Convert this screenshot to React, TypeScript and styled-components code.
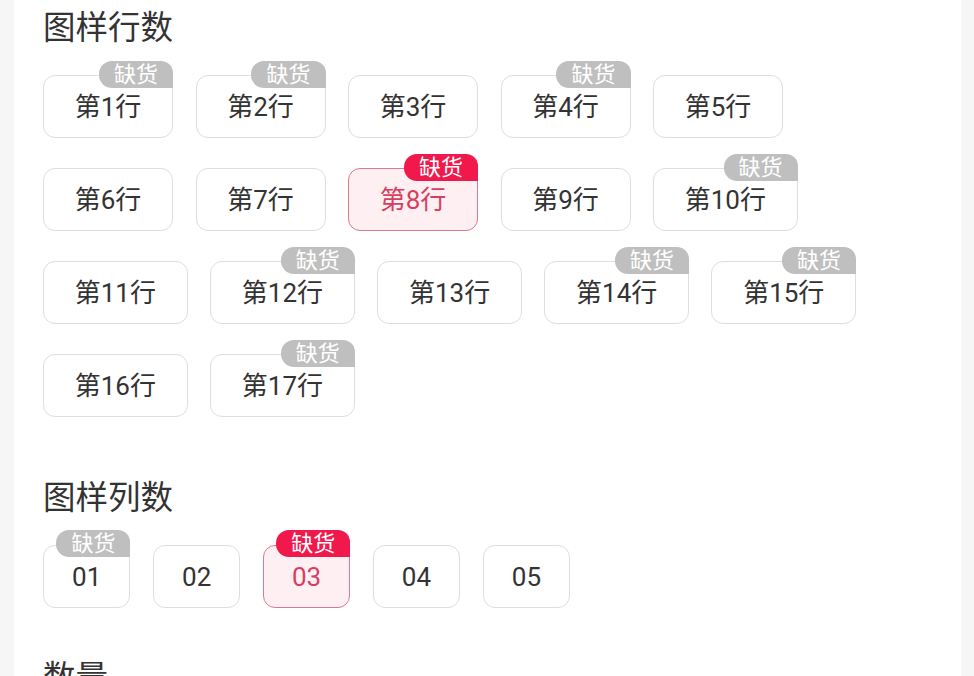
import React from "react";
import styled, { createGlobalStyle } from "styled-components";

const GlobalStyle = createGlobalStyle`
  html, body {
    margin: 0;
    padding: 0;
    background: #f6f6f6;
  }
  body {
    font-family: "Roboto", "Noto Sans CJK SC", sans-serif;
    color: #333;
  }
`;

const Page = styled.div`
  padding: 0 13px 0 14px;
  min-height: 676px;
`;

const Panel = styled.div`
  background: #ffffff;
  min-height: 676px;
  padding: 8px 29px 40px 29px;
  box-sizing: border-box;
`;

const Section = styled.section<{ $gap: number }>`
  margin-bottom: ${(p) => p.$gap}px;
`;

const Title = styled.h2`
  margin: 0;
  font-size: 32.5px;
  line-height: 40px;
  font-weight: 400;
  color: #333;
`;

const Options = styled.div`
  display: flex;
  flex-wrap: wrap;
  column-gap: 22.5px;
  row-gap: 30px;
  margin-top: 27px;
`;

const Option = styled.div<{ $active?: boolean; $pad: number }>`
  position: relative;
  box-sizing: border-box;
  height: 63px;
  padding: 1px ${(p) => p.$pad}px 0;
  display: flex;
  align-items: center;
  justify-content: center;
  border: 1px solid ${(p) => (p.$active ? "#d97a90" : "#dedede")};
  border-radius: 12px;
  background: ${(p) => (p.$active ? "#fdeff2" : "#ffffff")};
  color: ${(p) => (p.$active ? "#d63f61" : "#333333")};
  font-size: 26px;
  line-height: 1;
  white-space: nowrap;
`;

const Badge = styled.span<{ $active?: boolean; $top: number }>`
  position: absolute;
  top: ${(p) => p.$top}px;
  right: -1px;
  height: 27px;
  padding: 0 15px;
  border-radius: 13px 12px 0 13px;
  background: ${(p) => (p.$active ? "#f1184c" : "#bfbfbf")};
  color: #ffffff;
  font-size: 22px;
  line-height: 27px;
`;

type Item = { label: string; out?: boolean; active?: boolean };

const rows: Item[] = [
  { label: "第1行", out: true },
  { label: "第2行", out: true },
  { label: "第3行" },
  { label: "第4行", out: true },
  { label: "第5行" },
  { label: "第6行" },
  { label: "第7行" },
  { label: "第8行", out: true, active: true },
  { label: "第9行" },
  { label: "第10行", out: true },
  { label: "第11行" },
  { label: "第12行", out: true },
  { label: "第13行" },
  { label: "第14行", out: true },
  { label: "第15行", out: true },
  { label: "第16行" },
  { label: "第17行", out: true },
];

const cols: Item[] = [
  { label: "01", out: true },
  { label: "02" },
  { label: "03", out: true, active: true },
  { label: "04" },
  { label: "05" },
];

function OptionList({ items, pad, badgeTop }: { items: Item[]; pad: number; badgeTop: number }) {
  return (
    <Options>
      {items.map((it) => (
        <Option key={it.label} $active={it.active} $pad={pad}>
          {it.label}
          {it.out && (
            <Badge $active={it.active} $top={badgeTop}>
              缺货
            </Badge>
          )}
        </Option>
      ))}
    </Options>
  );
}

export default function App() {
  return (
    <>
      <GlobalStyle />
      <Page>
        <Panel>
          <Section $gap={61}>
            <Title>图样行数</Title>
            <OptionList items={rows} pad={30.7} badgeTop={-15} />
          </Section>
          <Section $gap={50}>
            <Title>图样列数</Title>
            <OptionList items={cols} pad={28.1} badgeTop={-16} />
          </Section>
          <Section $gap={0}>
            <Title>数量</Title>
          </Section>
        </Panel>
      </Page>
    </>
  );
}
